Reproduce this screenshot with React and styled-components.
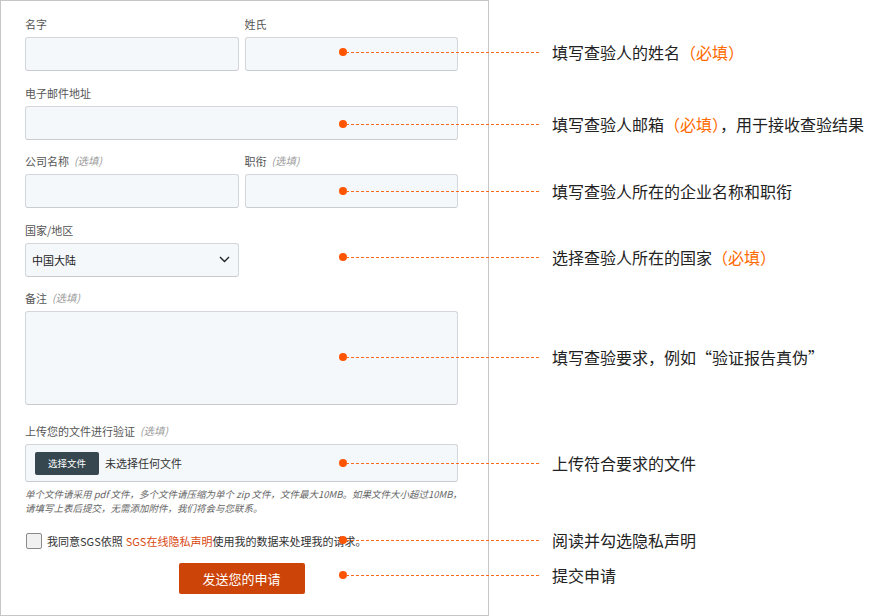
import React from 'react'
import styled, { createGlobalStyle } from 'styled-components'

const GlobalStyle = createGlobalStyle`
  html, body {
    margin: 0;
    padding: 0;
    background: #fff;
  }
  body {
    font-family: "Noto Sans CJK SC", "Noto Sans", sans-serif;
    color: #333;
  }
`

const Page = styled.div`
  position: relative;
  width: 877px;
  height: 616px;
  overflow: hidden;
`

const Panel = styled.form`
  box-sizing: border-box;
  width: 489px;
  height: 616px;
  border: 1px solid #c6c6c6;
  padding: 15px 30px 0 24px;
  display: flex;
  flex-direction: column;
`

const Field = styled.div`
  display: flex;
  flex-direction: column;
  margin-bottom: ${p => p.$mb ?? 13.5}px;
`

const Row = styled.div`
  display: grid;
  grid-template-columns: 1fr 1fr;
  gap: 6px;
`

const Label = styled.label`
  display: flex;
  align-items: center;
  height: 16px;
  font-size: 11px;
  line-height: 16px;
  color: #555;
  margin-bottom: 5px;
  white-space: nowrap;
`

const Optional = styled.span`
  font-style: italic;
  color: #999;
  margin-left: 5px;
  font-size: 10.5px;
  line-height: 16px;
`

const Input = styled.div`
  box-sizing: border-box;
  height: ${p => p.$h ?? 34}px;
  width: ${p => p.$w ?? '100%'};
  background: #f5f8fb;
  border: 1px solid #d3d6da;
  border-bottom-color: #c8cbcf;
  border-radius: 3px;
`

const Select = styled(Input)`
  display: flex;
  align-items: center;
  justify-content: space-between;
  padding: 0 8px 0 6px;
  font-size: 11px;
  color: #222;
`

const FileBox = styled(Input)`
  display: flex;
  align-items: center;
  gap: 6px;
  padding: 0 9px;
  font-size: 11px;
  color: #333;
`

const FileButton = styled.span`
  display: inline-flex;
  align-items: center;
  justify-content: center;
  width: 64px;
  height: 23px;
  background: #37474f;
  color: #fff;
  font-size: 9.5px;
  border-radius: 2px;
`

const Help = styled.p`
  margin: 5px 0 0;
  font-size: 9.5px;
  line-height: 14px;
  font-style: italic;
  color: #666;
  white-space: nowrap;
`

const Consent = styled.div`
  display: flex;
  align-items: center;
  gap: 5px;
  margin-top: 18px;
  padding-left: 1px;
  font-size: 11px;
  line-height: 16px;
  color: #333;
  white-space: nowrap;
`

const Checkbox = styled.span`
  box-sizing: border-box;
  width: 16px;
  height: 16px;
  border: 1px solid #8a8a8a;
  border-radius: 2px;
  background: #f1f1f1;
`

const Link = styled.span`
  color: #d9480f;
  margin-left: 3px;
`

const Submit = styled.button`
  align-self: center;
  margin-top: 14px;
  width: 126px;
  height: 31px;
  border: none;
  border-radius: 2px;
  background: #cc4408;
  color: #fff;
  font-family: inherit;
  font-size: 13px;
  padding: 0;
`

const Note = styled.div`
  position: absolute;
  left: 339px;
  top: ${p => p.$y - 12}px;
  height: 24px;
  display: flex;
  align-items: center;
  white-space: nowrap;
`

const Dot = styled.span`
  width: 8px;
  height: 8px;
  border-radius: 50%;
  background: #ff5400;
  flex: none;
`

const Dash = styled.span`
  width: 194px;
  height: 1px;
  margin-left: -1px;
  background-image: linear-gradient(90deg, #ff6a1a 60%, transparent 60%);
  background-size: 5px 1px;
`

const NoteText = styled.span`
  margin-left: 12px;
  font-size: 16px;
  font-weight: 400;
  color: #222;
`

const Required = styled.span`
  color: #ff6a00;
`

const notes = [
  { y: 52, text: '填写查验人的姓名', req: true },
  { y: 124, text: '填写查验人邮箱', req: true, tail: '，用于接收查验结果' },
  { y: 191, text: '填写查验人所在的企业名称和职衔' },
  { y: 257, text: '选择查验人所在的国家', req: true },
  { y: 357, text: '填写查验要求，例如“验证报告真伪”' },
  { y: 463, text: '上传符合要求的文件' },
  { y: 540, text: '阅读并勾选隐私声明' },
  { y: 575, text: '提交申请' },
]

function Chevron() {
  return (
    <svg width="11" height="7" viewBox="0 0 11 7" fill="none">
      <path d="M1 1l4.5 4.5L10 1" stroke="#222" strokeWidth="1.4" />
    </svg>
  )
}

export default function App() {
  return (
    <Page>
      <GlobalStyle />
      <Panel>
        <Row>
          <Field>
            <Label>名字</Label>
            <Input />
          </Field>
          <Field>
            <Label>姓氏</Label>
            <Input />
          </Field>
        </Row>

        <Field>
          <Label>电子邮件地址</Label>
          <Input />
        </Field>

        <Row>
          <Field>
            <Label>公司名称<Optional>(选填)</Optional></Label>
            <Input />
          </Field>
          <Field>
            <Label>职衔<Optional>(选填)</Optional></Label>
            <Input />
          </Field>
        </Row>

        <Field>
          <Label>国家/地区</Label>
          <Select $w="214px">
            中国大陆
            <Chevron />
          </Select>
        </Field>

        <Field $mb={18}>
          <Label>备注<Optional>(选填)</Optional></Label>
          <Input $h={94} />
        </Field>

        <Field $mb={0}>
          <Label>上传您的文件进行验证<Optional>(选填)</Optional></Label>
          <FileBox $h={38}>
            <FileButton>选择文件</FileButton>
            未选择任何文件
          </FileBox>
          <Help>
            单个文件请采用 pdf 文件，多个文件请压缩为单个 zip 文件，文件最大10MB。如果文件大小超过10MB，
            <br />
            请填写上表后提交，无需添加附件，我们将会与您联系。
          </Help>
        </Field>

        <Consent>
          <Checkbox />
          <span>
            我同意SGS依照<Link>SGS在线隐私声明</Link>使用我的数据来处理我的请求。
          </span>
        </Consent>

        <Submit type="button">发送您的申请</Submit>
      </Panel>

      {notes.map(n => (
        <Note key={n.y} $y={n.y}>
          <Dot />
          <Dash />
          <NoteText>
            {n.text}
            {n.req && <Required>（必填）</Required>}
            {n.tail}
          </NoteText>
        </Note>
      ))}
    </Page>
  )
}
